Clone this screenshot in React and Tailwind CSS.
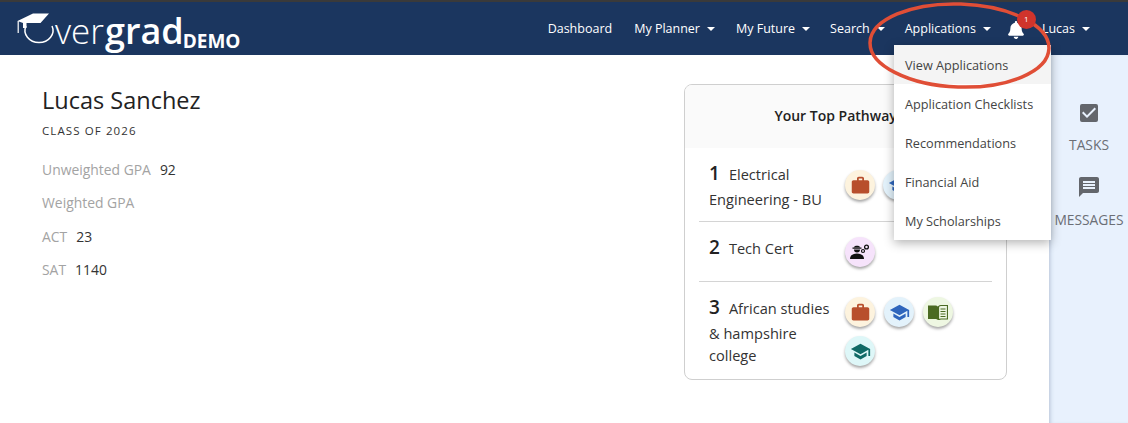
import React from "react";
import { FaBell } from "react-icons/fa";
import { MdCheckBox, MdMessage, MdWork, MdSchool } from "react-icons/md";

const font = { fontFamily: '"Open Sans", sans-serif' };

const Caret = () => (
  <span className="ml-[7px] inline-block w-0 h-0 border-x-[4px] border-x-transparent border-t-[4px] border-t-white relative top-[-2px]" />
);

const NavItem = ({ label, caret, className }) => (
  <span className={`text-[12.5px] text-white whitespace-nowrap ${className}`}>
    {label}
    {caret && <Caret />}
  </span>
);

const BookIcon = () => (
  <svg width="20" height="16" viewBox="0 0 20 16">
    <path d="M0 1.500h7.500c1 0 1.800.4 2.500 1.200V16c-.7-.7-1.500-1-2.500-1H0z" fill="#4b6a22" />
    <path d="M10.500 2.700c.7-.8 1.500-1.200 2.500-1.200h6.500V15H13c-1 0-1.800.3-2.500 1z" fill="none" stroke="#4b6a22" strokeWidth="1.200" />
    <path d="M12.500 5h5M12.500 7.500h5M12.500 10h5M12.500 12.500h5" stroke="#4b6a22" strokeWidth="1.200" />
  </svg>
);

const CertIcon = () => (
  <svg width="20" height="16" viewBox="0 0 20 16" fill="#111">
    <path d="M2.500 3.500h9v1.200h-9z" />
    <path d="M3.800 3.500 C4 1 10 1 10.200 3.500z" />
    <path d="M4 5.500h6a3 3 0 0 1-6 0z" />
    <path d="M0 15c0-3.500 2.700-5.500 7-5.500s7 2 7 5.500z" />
    <circle cx="16.500" cy="3" r="1.900" fill="none" stroke="#111" strokeWidth="1.300" />
    <circle cx="13" cy="7" r="1.500" fill="none" stroke="#111" strokeWidth="1.200" />
  </svg>
);

const Badge = ({ bg, children }) => (
  <div
    className={`w-[30px] h-[30px] rounded-full flex items-center justify-center shadow-[0_2px_3px_rgba(0,0,0,0.35)] ${bg}`}
  >
    {children}
  </div>
);

const briefcase = (
  <Badge bg="bg-[#fdf3de]">
    <MdWork className="text-[#b84f2c] text-[21px]" />
  </Badge>
);

const blueCap = (
  <Badge bg="bg-[#e3f2fb]">
    <MdSchool className="text-[#2f66bd] text-[21px]" />
  </Badge>
);

const Logo = () => (
  <div className="flex items-end h-[38px] ml-[17px] mt-[10px] text-white">
    <svg width="40" height="32" viewBox="0 0 40 32" className="shrink-0 mb-[5px]">
      <path d="M9 13a14 12 0 1 0 26 0" fill="none" stroke="#fff" strokeWidth="1.500" />
      <path d="M0.500 8 16 0.500 32 0.500 23.500 10 H9.500 V15 H6 V10z" fill="#fff" />
      <path d="M1.200 8v12" stroke="#fff" strokeWidth="1.200" />
    </svg>
    <span className="text-[35px] leading-[38px] font-light ml-[-2px] whitespace-nowrap">ver</span>
    <span className="text-[36px] leading-[38px] font-semibold ml-[1px] whitespace-nowrap">grad</span>
    <span className="text-[19px] leading-[20px] font-bold whitespace-nowrap mb-[-1px] ml-[-1px]">DEMO</span>
  </div>
);

const Stat = ({ label, value }) => (
  <div className="h-[33.3px] text-[13.9px] leading-[20px]">
    <span className="text-[#a3a3a3]">{label}</span>
    {value && <span className="ml-[9px] text-[#333]">{value}</span>}
  </div>
);

const Num = ({ n }) => <span className="text-[19px] text-[#222] font-semibold mr-[9px] leading-[30px]">{n}</span>;

const MenuItem = ({ label, active }) => (
  <div
    className={`h-[39px] flex items-center pl-[11px] pt-[3px] text-[12.7px] text-[#444] ${active ? "bg-[#f4f4f4]" : ""}`}
  >
    {label}
  </div>
);

export default function App() {
  return (
    <div style={font} className="relative w-[1128px] h-[423px] overflow-hidden bg-white flex flex-col">
      <div className="h-[55px] shrink-0 bg-[#1b365f] border-t-2 border-t-[#3a3a3a] flex justify-between">
        <Logo />
        <div className="flex items-center pt-[2px] pr-[38px]">
          <NavItem label="Dashboard" className="mr-[22px]" />
          <NavItem label="My Planner" caret className="mr-[21px]" />
          <NavItem label="My Future" caret className="mr-[20px]" />
          <NavItem label="Search" caret className="mr-[20px]" />
          <NavItem label="Applications" caret className="mr-[16px]" />
          <div className="relative mr-[17px]">
            <FaBell className="text-white text-[18px]" />
            <div className="absolute z-20 top-[-11px] left-[10px] w-[19px] h-[19px] rounded-full bg-[#d0342c] text-white text-[8px] flex items-center justify-center">
              1
            </div>
          </div>
          <NavItem label="Lucas" caret />
        </div>
      </div>

      <div className="flex-1 flex">
        <div className="w-[684px] shrink-0 pl-[42px] pt-[29px]">
          <div className="text-[23.5px] leading-[32px] text-[#222]">Lucas Sanchez</div>
          <div className="text-[11.5px] tracking-[1.1px] text-[#333] mt-[7px] mb-[21px] leading-[16px]">CLASS OF 2026</div>
          <Stat label="Unweighted GPA" value="92" />
          <Stat label="Weighted GPA" />
          <Stat label="ACT" value="23" />
          <Stat label="SAT" value="1140" />
        </div>

        <div className="w-[323px] shrink-0 mt-[29px] h-[296px] border border-[#cfcfcf] rounded-lg overflow-hidden text-[#333]">
          <div className="h-[63px] bg-[#fafafa] flex items-center justify-center text-[14px] font-semibold text-[#222] pb-[2px] pr-[13px]">
            Your Top Pathways
          </div>
          <div className="px-[14px]">
            <div className="h-[74px] border-b border-[#d4d4d4] flex pt-[10px] text-[14.6px]">
              <div className="w-[136px] pl-[10px] leading-[22px] shrink-0">
                <Num n="1" />Electrical Engineering - BU
              </div>
              <div className="flex gap-[8px] pt-[12px] pl-[10px]">
                {briefcase}
                {blueCap}
              </div>
            </div>
            <div className="h-[60px] border-b border-[#d4d4d4] flex pt-[10px] text-[14.6px]">
              <div className="w-[136px] pl-[10px] leading-[22px] shrink-0">
                <Num n="2" />Tech Cert
              </div>
              <div className="pl-[10px] pt-[5px]">
                <Badge bg="bg-[#f6e3fb]">
                  <CertIcon />
                </Badge>
              </div>
            </div>
            <div className="flex pt-[10px] text-[14.6px]">
              <div className="w-[136px] pl-[10px] leading-[22px] shrink-0">
                <Num n="3" />African studies &amp; hampshire college
              </div>
              <div className="flex flex-wrap content-start gap-x-[9px] gap-y-[9px] pl-[10px] pt-[5px] w-[120px]">
                {briefcase}
                {blueCap}
                <Badge bg="bg-[#eef7e2]">
                  <BookIcon />
                </Badge>
                <Badge bg="bg-[#def7f8]">
                  <MdSchool className="text-[#0f6a66] text-[21px]" />
                </Badge>
              </div>
            </div>
          </div>
        </div>

        <div className="ml-[42px] w-[79px] shrink-0 bg-[#e8f1fd] shadow-[inset_4px_0_4px_-3px_rgba(60,80,120,0.3)] flex flex-col items-center pt-[46px] pl-[1px] text-[#6b6f76] text-[13.8px]">
          <MdCheckBox className="text-[#63666c] text-[24px]" />
          <div className="mt-[11px] leading-[18px]">TASKS</div>
          <MdMessage className="text-[#63666c] text-[24px] mt-[21px]" />
          <div className="mt-[12px] leading-[18px]">MESSAGES</div>
        </div>
      </div>

      <div className="absolute left-[894px] top-[45px] w-[157px] h-[195px] bg-white shadow-[0_3px_10px_rgba(0,0,0,0.3)]">
        <MenuItem label="View Applications" active />
        <MenuItem label="Application Checklists" />
        <MenuItem label="Recommendations" />
        <MenuItem label="Financial Aid" />
        <MenuItem label="My Scholarships" />
      </div>

      <svg width="190" height="90" viewBox="0 0 190 90" className="absolute z-10 left-[866px] top-[2px] pointer-events-none">
        <ellipse cx="93.500" cy="43.500" rx="89.500" ry="41.500" fill="none" stroke="#e04e36" strokeWidth="3.500" transform="rotate(2 93.500 43.500)" />
      </svg>
    </div>
  );
}
